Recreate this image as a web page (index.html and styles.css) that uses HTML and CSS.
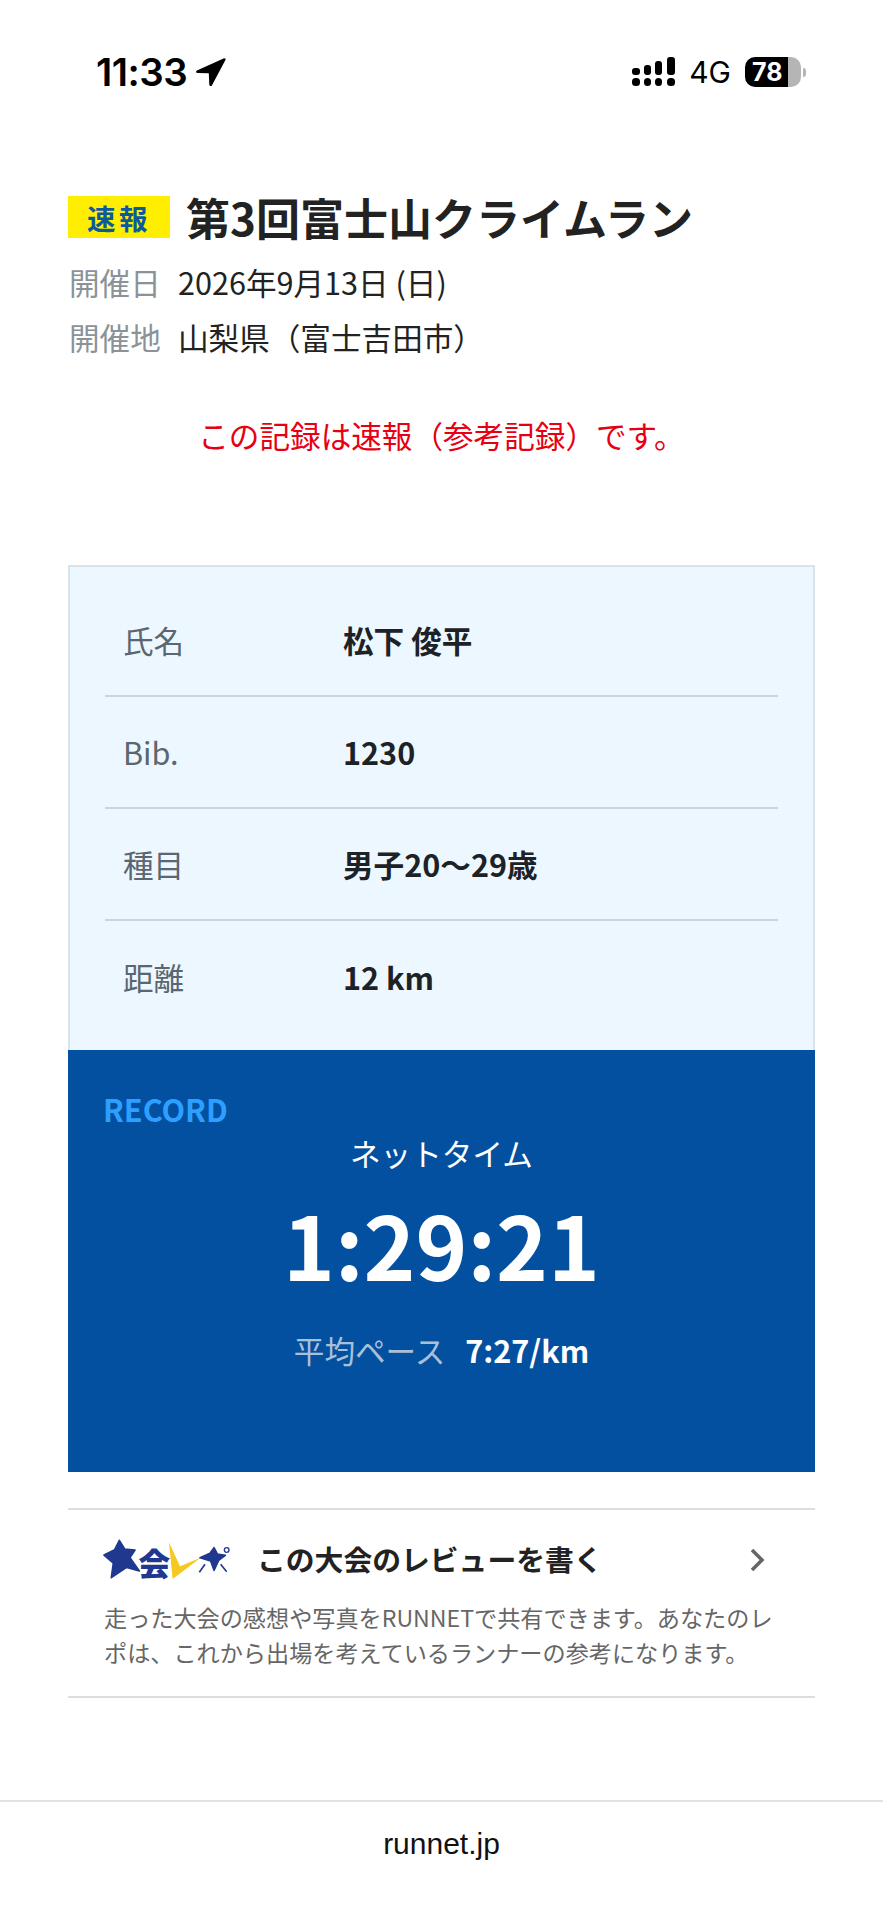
FILE: index.html
```html
<!DOCTYPE html>
<html lang="ja">
<head>
<meta charset="utf-8">
<title>第3回富士山クライムラン</title>
<link rel="stylesheet" href="styles.css">
</head>
<body>
<div class="status">
  <div class="status-left">
    <span class="clock">11:33</span>
    <svg class="arrow" viewBox="0 0 29 28"><path d="M27.2 1.2 1.8 12.6c-1.3.6-.9 2.4.5 2.4l10.6.2.5 10.7c.1 1.4 2 1.7 2.5.4L28.6 2.6c.3-.9-.6-1.8-1.4-1.4Z"/></svg>
  </div>
  <div class="status-right">
    <svg class="signal" viewBox="0 0 43 29"><rect x="0" y="11" width="8" height="7" rx="3"/><rect x="12" y="8" width="7" height="10" rx="3"/><rect x="23" y="4" width="7" height="14" rx="3"/><rect x="35" y="0" width="8" height="18" rx="3"/><rect x="0" y="21" width="8" height="8" rx="3.5"/><rect x="12" y="21" width="7" height="8" rx="3.5"/><rect x="23" y="21" width="7" height="8" rx="3.5"/><rect x="35" y="21" width="8" height="8" rx="3.5"/></svg>
    <span class="net">4G</span>
    <div class="battery"><span class="level">78</span></div>
    <span class="nub"></span>
  </div>
</div>
<main class="page">
  <div class="title-row">
    <span class="badge">速報</span>
    <h1 class="title">第3回富士山クライムラン</h1>
  </div>
  <dl class="meta">
    <div class="meta-row"><dt>開催日</dt><dd>2026年9月13日 (日)</dd></div>
    <div class="meta-row"><dt>開催地</dt><dd>山梨県（富士吉田市）</dd></div>
  </dl>
  <p class="notice">この記録は速報（参考記録）です。</p>
  <section class="card">
    <div class="info">
      <div class="info-row"><span class="info-label">氏名</span><span class="info-value">松下 俊平</span></div>
      <div class="info-row"><span class="info-label">Bib.</span><span class="info-value">1230</span></div>
      <div class="info-row"><span class="info-label">種目</span><span class="info-value">男子20～29歳</span></div>
      <div class="info-row"><span class="info-label">距離</span><span class="info-value">12 km</span></div>
    </div>
    <div class="record">
      <div class="record-head">RECORD</div>
      <div class="record-kind">ネットタイム</div>
      <div class="record-time">1:29:21</div>
      <div class="record-pace"><span class="pace-label">平均ペース</span><span class="pace-value">7:27/km</span></div>
    </div>
  </section>
  <section class="review">
    <div class="review-head">
      <svg class="review-logo" viewBox="0 0 405 150">
        <polygon class="logo-navy logo-round" points="58,16 74,42 105,45 90,68 118,108 80,97 34,128 40,84 12,60 44,44"/>
        <text class="logo-kai" x="115" y="122">会</text>
        <polygon class="logo-yellow" points="207,22 240,94 302,68 218,132"/>
        <polygon class="logo-navy logo-round" points="342,38 352,57 376,61 356,76 342,106 332,78 300,68 330,55"/>
        <circle class="logo-ring" cx="380" cy="45" r="7"/>
        <path class="logo-tick" d="M298 112 315 88M362 88 380 110"/>
      </svg>
      <span class="review-title">この大会のレビューを書く</span>
      <svg class="chevron" viewBox="0 0 16 24"><path d="M3 2 13 12 3 22"/></svg>
    </div>
    <p class="review-text">走った大会の感想や写真をRUNNETで共有できます。あなたのレポは、これから出場を考えているランナーの参考になります。</p>
  </section>
</main>
<footer class="address">runnet.jp</footer>
</body>
</html>
```
FILE: styles.css
```css
* { box-sizing: border-box; }
html, body { margin: 0; padding: 0; }
body {
  width: 883px;
  height: 1920px;
  background: #fff;
  color: #222;
  font-family: "Noto Sans CJK JP", "Noto Sans", sans-serif;
  font-size: 30.6px;
  overflow: hidden;
}
.status {
  height: 112px;
  padding: 52px 77px 0 96px;
  display: flex;
  justify-content: space-between;
  align-items: flex-start;
  font-family: Inter, "Liberation Sans", sans-serif;
  color: #000;
}
.status-left { display: flex; align-items: center; gap: 8px; height: 40px; }
.clock { font-size: 38.5px; font-weight: 600; line-height: 40px; letter-spacing: -0.5px; }
.arrow { width: 31px; height: 30px; display: block; }
.status-right { display: flex; align-items: center; height: 40px; }
.signal { width: 43px; height: 29px; display: block; fill: #000; margin-top: -2px; }
.net { font-size: 30px; font-weight: 400; margin-left: 14px; line-height: 40px; }
.battery {
  width: 56px;
  height: 30px;
  margin-left: 14px;
  border-radius: 10px;
  background: linear-gradient(90deg, #000 0 43px, #b5b5b5 43px);
  color: #fff;
  font-size: 25px;
  font-weight: 700;
  line-height: 30px;
  padding-left: 7px;
}
.nub { width: 3px; height: 9px; margin-left: 2px; background: #b5b5b5; border-radius: 0 3px 3px 0; }

.page { padding: 84px 68px 0; }
.title-row { display: flex; align-items: center; height: 42px; }
.badge {
  width: 102px;
  height: 42px;
  background: #ffee00;
  color: #0a5a9f;
  font-size: 28.5px;
  font-weight: 700;
  line-height: 43px;
  text-align: center;
  letter-spacing: 3.5px;
}
.title { margin: 0 0 0 16px; font-size: 44px; line-height: 56px; font-weight: 700; color: #222; white-space: nowrap; }
.meta { margin: 17px 0 0; }
.meta-row { display: flex; height: 55px; line-height: 55px; }
.meta-row dt { width: 109px; padding-left: 1px; color: #8b9399; }
.meta-row dd { margin: 0 0 0 1px; color: #222; }
.notice { margin: 46px 0 0; text-align: center; color: #e60012; line-height: 48px; }
.card { margin-top: 106px; }
.info {
  height: 485px;
  padding: 18px 35px 0;
  background: #edf7ff;
  border: 2px solid #d9e3ea;
  border-bottom: 0;
}
.info-row {
  display: flex;
  align-items: center;
  height: 112px;
  padding-left: 18px;
  border-bottom: 2px solid #c9d5df;
}
.info-row:last-child { border-bottom: 0; }
.info-label { width: 220px; color: #5a6670; }
.info-value { font-weight: 700; color: #1c2226; }
.record { height: 422px; padding: 35px 35px 0; background: #0350a0; color: #fff; }
.record-head { font-size: 30.6px; font-weight: 700; line-height: 48px; color: #2c9fff; }
.record-kind { text-align: center; font-size: 30.6px; line-height: 40px; }
.record-time { margin-top: 15px; text-align: center; font-size: 88px; font-weight: 700; line-height: 110px; }
.record-pace { margin-top: 32px; text-align: center; line-height: 40px; }
.pace-label { color: #a9c0d8; }
.pace-value { margin-left: 20px; font-weight: 700; }
.review {
  margin-top: 36px;
  height: 190px;
  padding: 25px 37px 0;
  border-top: 2px solid #ddd;
  border-bottom: 2px solid #ddd;
}
.review-head { display: flex; align-items: center; height: 50px; }
.review-logo { width: 135px; height: 50px; margin-left: -5px; display: block; flex: none; }
.logo-navy { fill: #20388f; }
.logo-round { stroke: #20388f; stroke-width: 5; stroke-linejoin: round; }
.logo-yellow { fill: #f5c91f; }
.logo-kai { font-size: 96px; font-weight: 900; fill: #20388f; }
.logo-ring { fill: none; stroke: #20388f; stroke-width: 4; }
.logo-tick { fill: none; stroke: #20388f; stroke-width: 5; }
.review-title { margin: 0 0 4px 22px; font-weight: 700; font-size: 28.8px; color: #222; }
.chevron { margin-left: auto; margin-right: 13px; width: 16px; height: 24px; fill: none; stroke: #666; stroke-width: 3.5; }
.review-text { margin: 15px -4px 0 -1px; font-size: 23.15px; line-height: 34.5px; color: #666; }
.address {
  margin-top: 102px;
  height: 90px;
  border-top: 2px solid #e2e2e2;
  text-align: center;
  font-family: "Liberation Sans", sans-serif;
  font-size: 30px;
  line-height: 84px;
  color: #111;
}
```
